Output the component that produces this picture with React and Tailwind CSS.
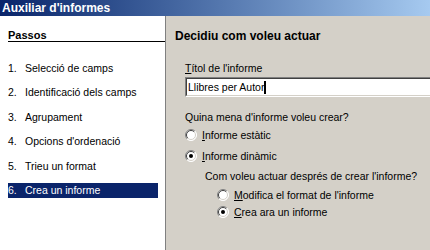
import { useState } from "react";

const steps = [
  "Selecció de camps",
  "Identificació dels camps",
  "Agrupament",
  "Opcions d'ordenació",
  "Trieu un format",
  "Crea un informe",
];

const Radio = ({ checked }) => (
  <svg width="12" height="12" viewBox="0 0 12 12" className="shrink-0">
    <circle cx="6" cy="6" r="5.5" fill="#ffffff" />
    <path d="M2.1 9.9 A5.5 5.5 0 0 1 9.9 2.1" stroke="#808080" fill="none" />
    <path d="M9.9 2.1 A5.5 5.5 0 0 1 2.1 9.9" stroke="#ffffff" fill="none" />
    <path d="M2.8 9.2 A4.5 4.5 0 0 1 9.2 2.8" stroke="#404040" fill="none" />
    <path d="M9.2 2.8 A4.5 4.5 0 0 1 2.8 9.2" stroke="#d4d0c8" fill="none" />
    {checked && <circle cx="6" cy="6" r="2" fill="#000000" />}
  </svg>
);

const Option = ({ accel, rest, checked, onClick }) => (
  <div className="flex h-[13px] items-center gap-[5px]" onClick={onClick}>
    <Radio checked={checked} />
    <span className="leading-[13px]">
      <span className="underline">{accel}</span>
      {rest}
    </span>
  </div>
);

const App = () => {
  const [kind, setKind] = useState("dynamic");
  const [after, setAfter] = useState("create");

  return (
    <div className="flex h-[250px] w-[430px] flex-col overflow-hidden font-['Liberation_Sans',Arial,sans-serif] text-[10.5px] text-black">
      {/* title bar */}
      <div className="h-4 bg-gradient-to-r from-[#0a246a] to-[#a6caf0] pl-[2px] text-[12px] font-bold leading-4 text-white">
        Auxiliar d'informes
      </div>

      <div className="flex flex-1">
        {/* steps */}
        <div className="w-[166px] shrink-0 border-r border-[#808080] bg-white pl-2 pt-[14px]">
          <div className="h-[12px] border-b border-black text-[11px] font-bold leading-[11px]">
            Passos
          </div>
          <div className="mt-[18.5px] flex flex-col gap-[9.5px]">
            {steps.map((step, i) => (
              <div
                key={step}
                className={
                  i === 5
                    ? "flex h-[15px] w-[150px] bg-[#0a246a] leading-[15px] text-white"
                    : "flex h-[15px] w-[150px] leading-[15px]"
                }
              >
                <span className="w-[17px]">{i + 1}.</span>
                <span>{step}</span>
              </div>
            ))}
          </div>
        </div>

        {/* content */}
        <div className="flex-1 bg-[#d4d0c8] pl-[9px] pt-[14px]">
          <div className="text-[12px] font-bold leading-[13px]">Decidiu com voleu actuar</div>

          <div className="pl-[10px]">
            <div className="mt-[18.5px] leading-[13px]">
              <span className="underline">T</span>ítol de l'informe
            </div>
            <div className="mt-[2.5px] w-[250px] border border-b-white border-l-[#808080] border-r-white border-t-[#808080]">
              <div className="flex h-[18px] items-center border border-b-[#d4d0c8] border-l-[#404040] border-r-[#d4d0c8] border-t-[#404040] bg-white pl-[1px]">
                <span className="leading-4">Llibres per Autor</span>
                <span className="h-[13px] w-[2px] bg-black" />
              </div>
            </div>

            <div className="mt-[13.5px] leading-[13px]">Quina mena d'informe voleu crear?</div>
            <div className="mt-[5px]">
              <Option
                accel="I"
                rest="nforme estàtic"
                checked={kind === "static"}
                onClick={() => setKind("static")}
              />
            </div>
            <div className="mt-[8px]">
              <Option
                accel="I"
                rest="nforme dinàmic"
                checked={kind === "dynamic"}
                onClick={() => setKind("dynamic")}
              />
            </div>

            <div className="mt-[7px] pl-5 leading-[13px]">
              Com voleu actuar després de crear l'informe?
            </div>
            <div className="mt-[6px] pl-8">
              <Option
                accel="M"
                rest="odifica el format de l'informe"
                checked={after === "modify"}
                onClick={() => setAfter("modify")}
              />
            </div>
            <div className="mt-[4px] pl-8">
              <Option
                accel="C"
                rest="rea ara un informe"
                checked={after === "create"}
                onClick={() => setAfter("create")}
              />
            </div>
          </div>
        </div>
      </div>
    </div>
  );
};

export default App;
